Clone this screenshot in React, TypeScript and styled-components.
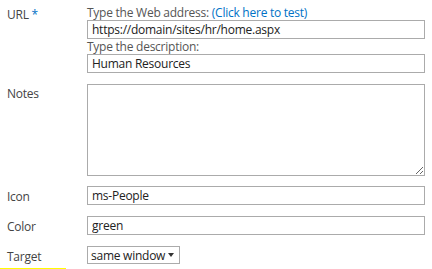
import * as React from "react";
import styled, { createGlobalStyle } from "styled-components";

const GlobalStyle = createGlobalStyle`
  body {
    margin: 0;
    background: #fff;
    font-family: "Open Sans", "Noto Sans", sans-serif;
    font-size: 12px;
    letter-spacing: -0.25px;
    color: #444;
  }
`;

const Form = styled.div`
  width: 432px;
  height: 269px;
  overflow: hidden;
  display: flex;
  flex-direction: column;
`;

const Row = styled.div<{ $gap?: number }>`
  display: grid;
  grid-template-columns: 80px 338px;
  padding-left: 7px;
  margin-bottom: ${(p) => p.$gap ?? 11}px;
`;

const Label = styled.div<{ $top?: number }>`
  padding-top: ${(p) => p.$top ?? 3}px;
  color: #444;
  line-height: 16px;
`;

const Required = styled.span`
  color: #0072c6;
`;

const Field = styled.div`
  display: flex;
  flex-direction: column;
`;

const Hint = styled.div`
  color: #555;
  line-height: 14px;
  height: 14px;
`;

const Link = styled.a`
  color: #0072c6;
  text-decoration: none;
  cursor: pointer;
`;

const TextInput = styled.input`
  box-sizing: border-box;
  width: 338px;
  height: 19px;
  border: 1px solid #ababab;
  padding: 0 4px;
  font-family: inherit;
  font-size: 12px;
  letter-spacing: -0.25px;
  color: #222;
  outline: none;
`;

const NotesBox = styled.textarea`
  box-sizing: border-box;
  width: 338px;
  height: 92px;
  border: 1px solid #ababab;
  font-family: inherit;
  font-size: 12px;
  outline: none;
  margin: 0;
  display: block;
`;

const SelectWrap = styled.div`
  position: relative;
  width: 93px;
  height: 18px;
`;

const Select = styled.select`
  box-sizing: border-box;
  appearance: none;
  width: 93px;
  height: 18px;
  border: 1px solid #ababab;
  border-radius: 0;
  background: #fff;
  padding: 0 10px 0 3px;
  font-family: inherit;
  font-size: 12px;
  letter-spacing: -0.25px;
  color: #222;
  outline: none;
`;

const Arrow = styled.span`
  position: absolute;
  right: 6px;
  top: 7px;
  width: 0;
  height: 0;
  border-left: 3px solid transparent;
  border-right: 3px solid transparent;
  border-top: 4px solid #333;
  pointer-events: none;
`;

const FocusBar = styled.div`
  width: 66px;
  height: 2px;
  margin-top: 3px;
  background: #ffff00;
`;

const App = () => (
  <Form>
    <GlobalStyle />
    <Row style={{ paddingTop: 6 }}>
      <Label $top={1}>
        URL <Required>*</Required>
      </Label>
      <Field>
        <Hint>
          Type the Web address: <Link>(Click here to test)</Link>
        </Hint>
        <TextInput defaultValue="https://domain/sites/hr/home.aspx" />
        <Hint style={{ marginTop: 1 }}>Type the description:</Hint>
        <TextInput defaultValue="Human Resources" />
      </Field>
    </Row>
    <Row $gap={10}>
      <Label $top={2}>Notes</Label>
      <NotesBox />
    </Row>
    <Row>
      <Label>Icon</Label>
      <TextInput defaultValue="ms-People" />
    </Row>
    <Row>
      <Label>Color</Label>
      <TextInput defaultValue="green" />
    </Row>
    <Row $gap={0}>
      <Label>Target</Label>
      <SelectWrap>
        <Select defaultValue="same">
          <option value="same">same window</option>
          <option value="new">new window</option>
        </Select>
        <Arrow />
      </SelectWrap>
    </Row>
    <FocusBar />
  </Form>
);

export default App;
